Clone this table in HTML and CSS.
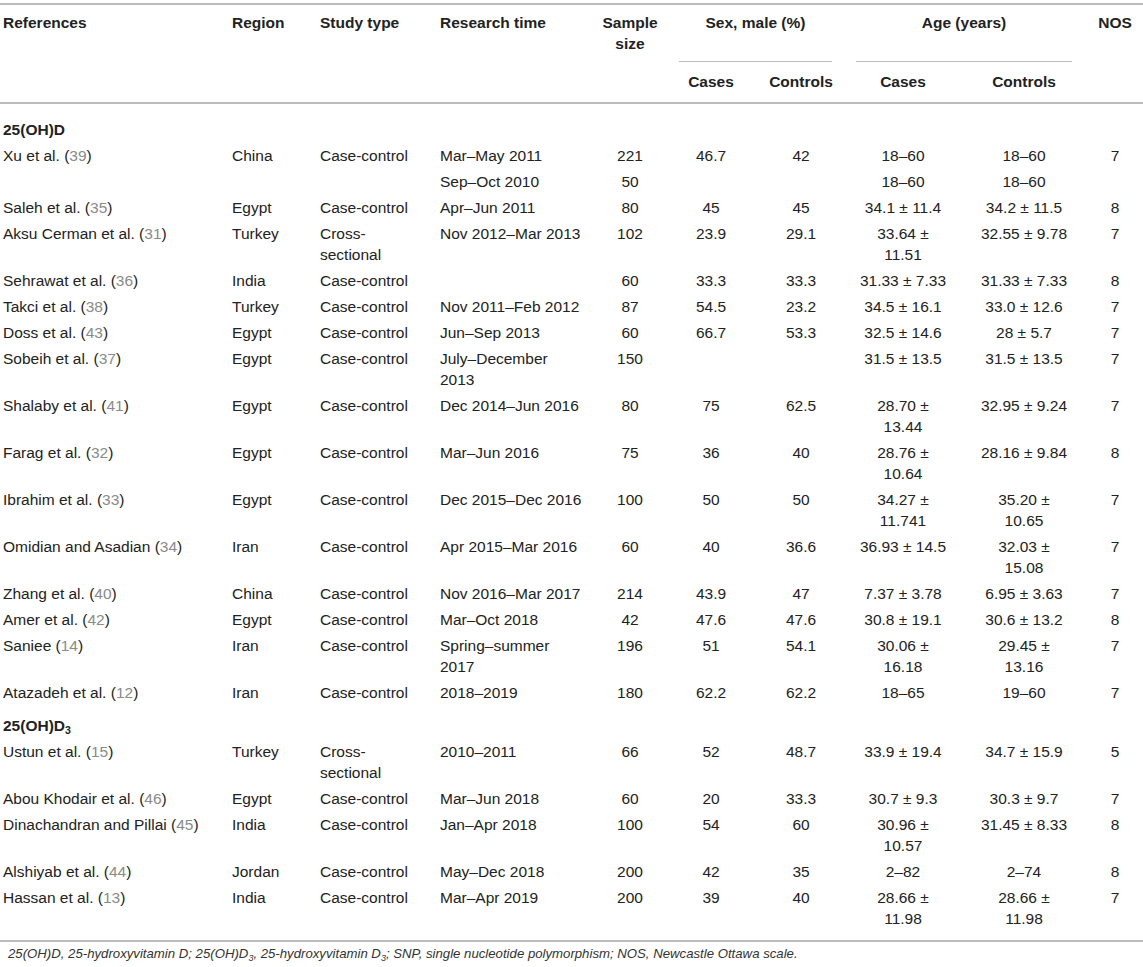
FILE: index.html
```html
<!DOCTYPE html>
<html lang="en">
<head>
<meta charset="utf-8">
<title>Table</title>
<link rel="stylesheet" href="styles.css">
</head>
<body>
<table class="data-table">
  <colgroup>
    <col class="w1"><col class="w2"><col class="w3"><col class="w4"><col class="w5">
    <col class="w6"><col class="w7"><col class="w8"><col class="w9"><col class="w10">
  </colgroup>
  <thead>
    <tr class="h-top">
      <th rowspan="2" class="hc1">References</th>
      <th rowspan="2" class="hc2">Region</th>
      <th rowspan="2" class="hc3">Study type</th>
      <th rowspan="2" class="hc4">Research time</th>
      <th rowspan="2" class="hc5">Sample size</th>
      <th colspan="2" class="h-group h-sex">Sex, male (%)</th>
      <th colspan="2" class="h-group h-age">Age (years)</th>
      <th rowspan="2" class="hc10">NOS</th>
    </tr>
    <tr class="h-sub">
      <th>Cases</th>
      <th>Controls</th>
      <th>Cases</th>
      <th>Controls</th>
    </tr>
  </thead>
  <tbody>
    <tr class="group first-group"><td colspan="10">25(OH)D</td></tr>
    <tr><td>Xu et al. (<span class="ref">39</span>)</td><td>China</td><td>Case-control</td><td>Mar–May 2011</td><td>221</td><td>46.7</td><td>42</td><td>18–60</td><td>18–60</td><td>7</td></tr>
    <tr><td></td><td></td><td></td><td>Sep–Oct 2010</td><td>50</td><td></td><td></td><td>18–60</td><td>18–60</td><td></td></tr>
    <tr><td>Saleh et al. (<span class="ref">35</span>)</td><td>Egypt</td><td>Case-control</td><td>Apr–Jun 2011</td><td>80</td><td>45</td><td>45</td><td>34.1 ± 11.4</td><td>34.2 ± 11.5</td><td>8</td></tr>
    <tr><td>Aksu Cerman et al. (<span class="ref">31</span>)</td><td>Turkey</td><td>Cross-sectional</td><td>Nov 2012–Mar 2013</td><td>102</td><td>23.9</td><td>29.1</td><td>33.64 ± 11.51</td><td>32.55 ± 9.78</td><td>7</td></tr>
    <tr><td>Sehrawat et al. (<span class="ref">36</span>)</td><td>India</td><td>Case-control</td><td></td><td>60</td><td>33.3</td><td>33.3</td><td>31.33 ± 7.33</td><td>31.33 ± 7.33</td><td>8</td></tr>
    <tr><td>Takci et al. (<span class="ref">38</span>)</td><td>Turkey</td><td>Case-control</td><td>Nov 2011–Feb 2012</td><td>87</td><td>54.5</td><td>23.2</td><td>34.5 ± 16.1</td><td>33.0 ± 12.6</td><td>7</td></tr>
    <tr><td>Doss et al. (<span class="ref">43</span>)</td><td>Egypt</td><td>Case-control</td><td>Jun–Sep 2013</td><td>60</td><td>66.7</td><td>53.3</td><td>32.5 ± 14.6</td><td>28 ± 5.7</td><td>7</td></tr>
    <tr><td>Sobeih et al. (<span class="ref">37</span>)</td><td>Egypt</td><td>Case-control</td><td>July–December 2013</td><td>150</td><td></td><td></td><td>31.5 ± 13.5</td><td>31.5 ± 13.5</td><td>7</td></tr>
    <tr><td>Shalaby et al. (<span class="ref">41</span>)</td><td>Egypt</td><td>Case-control</td><td>Dec 2014–Jun 2016</td><td>80</td><td>75</td><td>62.5</td><td>28.70 ± 13.44</td><td>32.95 ± 9.24</td><td>7</td></tr>
    <tr><td>Farag et al. (<span class="ref">32</span>)</td><td>Egypt</td><td>Case-control</td><td>Mar–Jun 2016</td><td>75</td><td>36</td><td>40</td><td>28.76 ± 10.64</td><td>28.16 ± 9.84</td><td>8</td></tr>
    <tr><td>Ibrahim et al. (<span class="ref">33</span>)</td><td>Egypt</td><td>Case-control</td><td>Dec 2015–Dec 2016</td><td>100</td><td>50</td><td>50</td><td>34.27 ± 11.741</td><td>35.20 ± 10.65</td><td>7</td></tr>
    <tr><td>Omidian and Asadian (<span class="ref">34</span>)</td><td>Iran</td><td>Case-control</td><td>Apr 2015–Mar 2016</td><td>60</td><td>40</td><td>36.6</td><td>36.93 ± 14.5</td><td>32.03 ± 15.08</td><td>7</td></tr>
    <tr><td>Zhang et al. (<span class="ref">40</span>)</td><td>China</td><td>Case-control</td><td>Nov 2016–Mar 2017</td><td>214</td><td>43.9</td><td>47</td><td>7.37 ± 3.78</td><td>6.95 ± 3.63</td><td>7</td></tr>
    <tr><td>Amer et al. (<span class="ref">42</span>)</td><td>Egypt</td><td>Case-control</td><td>Mar–Oct 2018</td><td>42</td><td>47.6</td><td>47.6</td><td>30.8 ± 19.1</td><td>30.6 ± 13.2</td><td>8</td></tr>
    <tr><td>Saniee (<span class="ref">14</span>)</td><td>Iran</td><td>Case-control</td><td>Spring–summer 2017</td><td>196</td><td>51</td><td>54.1</td><td>30.06 ± 16.18</td><td>29.45 ± 13.16</td><td>7</td></tr>
    <tr><td>Atazadeh et al. (<span class="ref">12</span>)</td><td>Iran</td><td>Case-control</td><td>2018–2019</td><td>180</td><td>62.2</td><td>62.2</td><td>18–65</td><td>19–60</td><td>7</td></tr>
    <tr class="group second-group"><td colspan="10">25(OH)D<sub>3</sub></td></tr>
    <tr><td>Ustun et al. (<span class="ref">15</span>)</td><td>Turkey</td><td>Cross-sectional</td><td>2010–2011</td><td>66</td><td>52</td><td>48.7</td><td>33.9 ± 19.4</td><td>34.7 ± 15.9</td><td>5</td></tr>
    <tr><td>Abou Khodair et al. (<span class="ref">46</span>)</td><td>Egypt</td><td>Case-control</td><td>Mar–Jun 2018</td><td>60</td><td>20</td><td>33.3</td><td>30.7 ± 9.3</td><td>30.3 ± 9.7</td><td>7</td></tr>
    <tr><td>Dinachandran and Pillai (<span class="ref">45</span>)</td><td>India</td><td>Case-control</td><td>Jan–Apr 2018</td><td>100</td><td>54</td><td>60</td><td>30.96 ± 10.57</td><td>31.45 ± 8.33</td><td>8</td></tr>
    <tr><td>Alshiyab et al. (<span class="ref">44</span>)</td><td>Jordan</td><td>Case-control</td><td>May–Dec 2018</td><td>200</td><td>42</td><td>35</td><td>2–82</td><td>2–74</td><td>8</td></tr>
    <tr class="last-row"><td>Hassan et al. (<span class="ref">13</span>)</td><td>India</td><td>Case-control</td><td>Mar–Apr 2019</td><td>200</td><td>39</td><td>40</td><td>28.66 ± 11.98</td><td>28.66 ± 11.98</td><td>7</td></tr>
  </tbody>
</table>
<p class="footnote">25(OH)D, 25-hydroxyvitamin D; 25(OH)D<sub>3</sub>, 25-hydroxyvitamin D<sub>3</sub>; SNP, single nucleotide polymorphism; NOS, Newcastle Ottawa scale.</p>
</body>
</html>
```

FILE: styles.css
```css
html, body {
  margin: 0;
  padding: 0;
  background: #ffffff;
}

body {
  font-family: "Liberation Sans", Arial, Helvetica, sans-serif;
  color: #222222;
}

.data-table {
  width: 1143px;
  table-layout: fixed;
  border-collapse: collapse;
  margin-top: 3px;
  font-size: 15.5px;
  line-height: 21px;
}

.w1 { width: 228px; }
.w2 { width: 89px; }
.w3 { width: 120px; }
.w4 { width: 153px; }
.w5 { width: 80px; }
.w6 { width: 82px; }
.w7 { width: 98px; }
.w8 { width: 106px; }
.w9 { width: 136px; }
.w10 { width: 51px; }

.data-table thead {
  border-top: 2px solid #bcbcbc;
  border-bottom: 2px solid #bcbcbc;
}

.data-table tbody {
  border-bottom: 2px solid #bcbcbc;
}

.data-table th {
  font-weight: bold;
  vertical-align: top;
  text-align: left;
  padding: 7px 0 0 0;
}

.hc1 { padding-left: 3px !important; }
.hc2 { padding-left: 4px !important; }
.hc3 { padding-left: 3px !important; }
.hc4 { padding-left: 3px !important; }
.data-table th.hc5 { text-align: center; }
.data-table th.hc10 { text-align: center; padding-right: 5px; }

.data-table th.h-group {
  text-align: center;
  padding-bottom: 29px;
  background-image: linear-gradient(#bcbcbc, #bcbcbc);
  background-repeat: no-repeat;
}

.data-table th.h-sex {
  padding-left: 9px;
  padding-right: 18px;
  background-size: calc(100% - 27px) 1px;
  background-position: 9px 100%;
}

.data-table th.h-age {
  padding-left: 6px;
  padding-right: 20px;
  background-size: calc(100% - 26px) 1px;
  background-position: 6px 100%;
}

.data-table .h-sub th {
  text-align: center;
  padding: 9px 0 10px 0;
}

.data-table td {
  vertical-align: top;
  padding: 2.5px 0;
  text-align: center;
}

.data-table td:nth-child(1) { text-align: left; padding-left: 3px; }
.data-table td:nth-child(2) { text-align: left; padding-left: 4px; }
.data-table td:nth-child(3) { text-align: left; padding-left: 3px; padding-right: 22px; }
.data-table td:nth-child(4) { text-align: left; padding-left: 3px; padding-right: 6px; }
.data-table td:nth-child(8) { padding-left: 8px; padding-right: 8px; }
.data-table td:nth-child(9) { padding-left: 23px; padding-right: 23px; }
.data-table td:nth-child(10) { padding-right: 5px; }

.data-table tr.group td {
  font-weight: bold;
  text-align: left;
  padding-left: 3px;
}

.data-table tr.first-group td {
  padding-top: 15px;
}

.data-table tr.second-group td {
  padding-top: 9px;
}

.data-table tr.last-row td {
  padding-bottom: 11px;
}

.ref {
  color: #8a8a8a;
}

sub {
  font-size: 0.68em;
  line-height: 0;
  vertical-align: -0.3em;
}

.footnote {
  margin: 0;
  padding: 3px 0 0 8px;
  font-size: 13.2px;
  line-height: 18px;
  font-style: italic;
  color: #333333;
}
```
